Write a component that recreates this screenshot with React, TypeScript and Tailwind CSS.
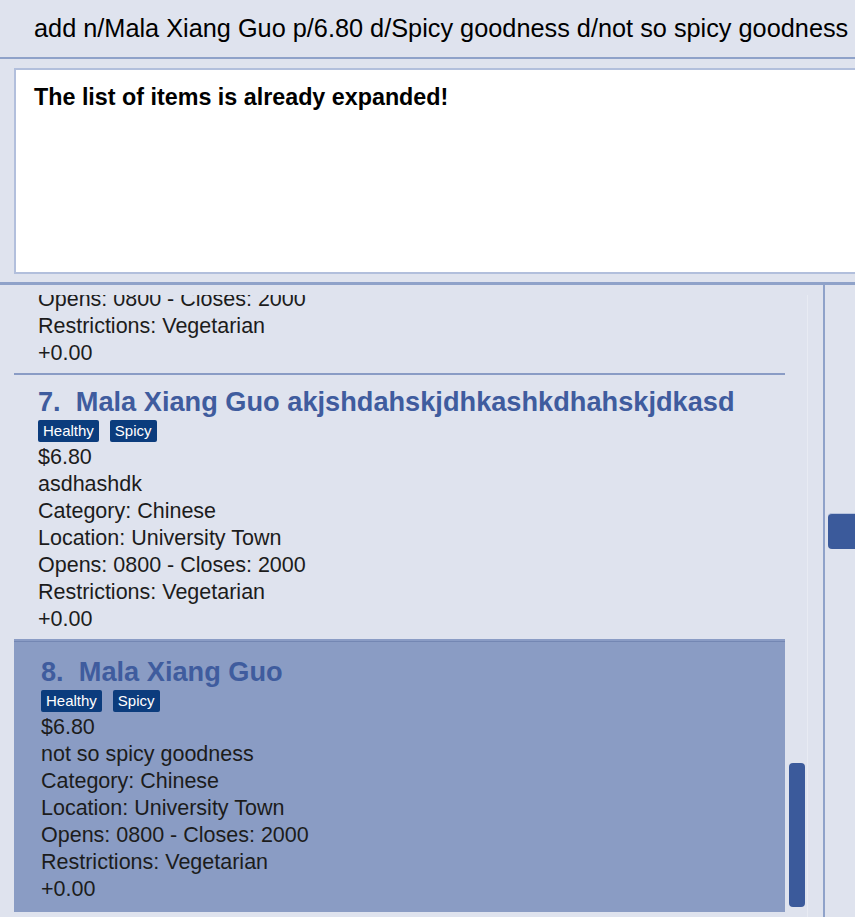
import React from "react";

interface Item {
  index: number;
  name: string;
  tags: string[];
  price: string;
  description: string;
  category: string;
  location: string;
  opens: string;
  closes: string;
  restrictions: string;
  rating: string;
}

const ITEMS: Item[] = [
  {
    index: 6,
    name: "Mala Xiang Guo",
    tags: ["Healthy", "Spicy"],
    price: "$6.80",
    description: "Spicy goodness",
    category: "Chinese",
    location: "University Town",
    opens: "0800",
    closes: "2000",
    restrictions: "Vegetarian",
    rating: "+0.00",
  },
  {
    index: 7,
    name: "Mala Xiang Guo akjshdahskjdhkashkdhahskjdkasd",
    tags: ["Healthy", "Spicy"],
    price: "$6.80",
    description: "asdhashdk",
    category: "Chinese",
    location: "University Town",
    opens: "0800",
    closes: "2000",
    restrictions: "Vegetarian",
    rating: "+0.00",
  },
  {
    index: 8,
    name: "Mala Xiang Guo",
    tags: ["Healthy", "Spicy"],
    price: "$6.80",
    description: "not so spicy goodness",
    category: "Chinese",
    location: "University Town",
    opens: "0800",
    closes: "2000",
    restrictions: "Vegetarian",
    rating: "+0.00",
  },
];

function ItemCard({ item, selected }: { item: Item; selected?: boolean }) {
  const lines = [
    item.price,
    item.description,
    `Category: ${item.category}`,
    `Location: ${item.location}`,
    `Opens: ${item.opens} - Closes: ${item.closes}`,
    `Restrictions: ${item.restrictions}`,
    item.rating,
  ];

  return (
    <div
      className={
        selected
          ? "bg-[#8a9cc4] border-t border-[#7487b3] pl-[27px] pt-[15px] pb-[9px]"
          : "border-b-2 border-[#8a9cc5] pl-[24px] pt-[12px] pb-[6px]"
      }
    >
      <div className="h-[30px] leading-[30px] text-[27.2px] font-bold text-[#3f5c9e] whitespace-pre">
        {`${item.index}.  ${item.name}`}
      </div>
      <div className="mt-[3px] h-[24px] flex items-start gap-[11px]">
        {item.tags.map((tag) => (
          <span
            key={tag}
            className="h-[22px] leading-[22px] px-[5px] rounded-[2px] bg-[#0b3c7d] text-white text-[15px]"
          >
            {tag}
          </span>
        ))}
      </div>
      {lines.map((line, i) => (
        <div key={i} className="leading-[27px] text-[21.5px] text-[#1c1c1c] whitespace-nowrap">
          {line}
        </div>
      ))}
    </div>
  );
}

export default function App() {
  return (
    <div
      className="w-[855px] h-[917px] overflow-hidden bg-[#dfe3ee] flex flex-col"
      style={{ fontFamily: '"Liberation Sans", Arial, sans-serif' }}
    >
      {/* Command box */}
      <div className="h-[59px] shrink-0 border-b-2 border-[#8fa2c9] flex items-center pl-[34px] text-[25.3px] text-black whitespace-nowrap">
        add n/Mala Xiang Guo p/6.80 d/Spicy goodness d/not so spicy goodness
      </div>

      {/* Result display */}
      <div className="shrink-0 pt-[9px] pb-[8px] pl-[14px]">
        <div className="h-[206px] bg-white border-2 border-r-0 border-[#b2bfdc] pl-[18px] pt-[10px] text-[23.3px] font-bold text-black">
          The list of items is already expanded!
        </div>
      </div>

      {/* List panels */}
      <div className="flex-1 min-h-0 border-t-[3px] border-[#8fa2c9] flex">
        <div className="w-[825px] border-r-2 border-[#8fa2c9] flex pt-[10px]">
          <div className="ml-[14px] w-[771px] overflow-hidden">
            <div className="-mt-[186px]">
              <ItemCard item={ITEMS[0]} />
              <ItemCard item={ITEMS[1]} />
              <ItemCard item={ITEMS[2]} selected />
            </div>
          </div>
          <div className="w-[22px] flex flex-col justify-end pl-[4px] pb-[10px]">
            <div className="w-[16px] h-[144px] rounded-[4px] bg-[#3b5a9b]" />
          </div>
          <div className="flex-1 border-l border-[#e8ebf3]" />
        </div>
        <div className="flex-1 pt-[228px] pl-[3px]">
          <div className="h-[36px] rounded-l-[4px] bg-[#3b5a9b] border-t border-[#b8c4de]" />
        </div>
      </div>
    </div>
  );
}
